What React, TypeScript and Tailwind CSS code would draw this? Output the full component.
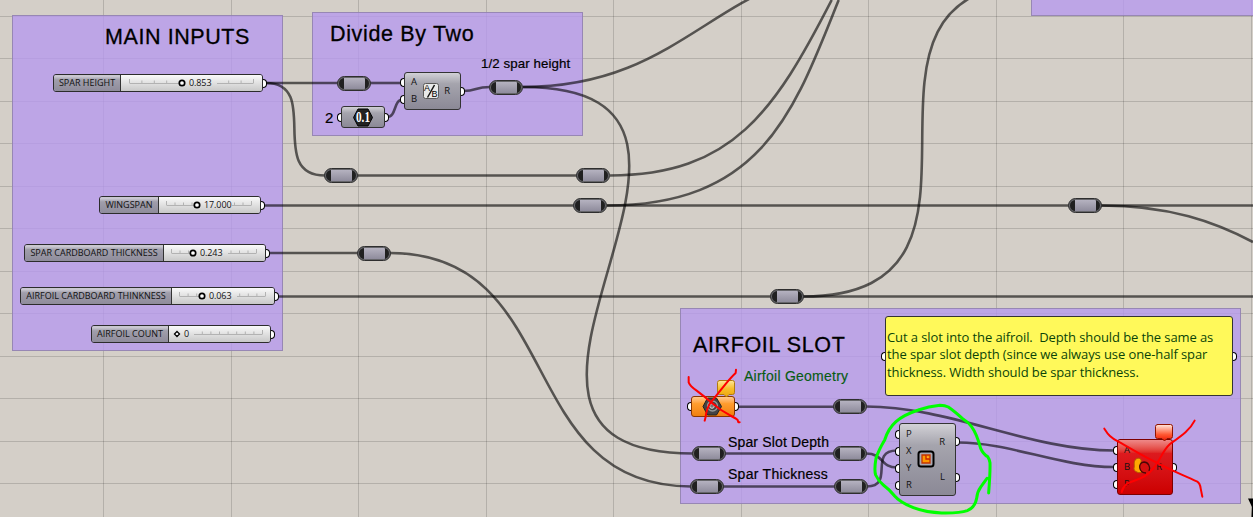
import React from "react";
import clsx from "clsx";

const VERTICALS = [103.5, 231.5, 358.5, 486.5, 613.5, 741.5, 868.5, 996.5, 1123.5, 1251.5];
const HORIZONTALS = [16.5, 58.5, 101.5, 143.5, 186.5, 228.5, 271.5, 313.5, 356.5, 398.5, 441.5, 483.5];

const WIRES = [
  "M266 83H338",
  "M266 83C322 83 266 175.5 325 175.5",
  "M370 83H402",
  "M387 117C397 117 393 99.500 403 99.500",
  "M463 91C478 91 474 87 490 87",
  "M523 87C693 87 717 -36 887 -36",
  "M523 87C799 87 417 453.500 693 453.500",
  "M357 175.500H577",
  "M610 175.500C732.700 175.500 775 110.300 831.700 0",
  "M264 205.500H574",
  "M607 205.500C764 205.500 795 108.300 838.700 0",
  "M607 205.500H1069",
  "M1101 205.500H1253",
  "M1101 205.500C1170 205.500 1215 222 1253 242",
  "M269 253H358",
  "M390 253C567 253 513 486.500 691 486.500",
  "M277 296.500H771",
  "M803 296.500H1253",
  "M803 296.500C1039 296.500 805.700 -17 1040.700 -17",
  "M737 406.800H834",
  "M866 406.500C950 406.500 1030 450.500 1114 450.500",
  "M958 442.500C1010 442.500 1060 467 1114 467",
  "M725 453.500H834",
  "M723 486.500H835",
  "M866 453.500C884 453.500 880 467.500 897 467.500",
  "M867 486.500C895 486.500 868 450.500 897 450.500",
];

const RELAYS = [
  "left-[337px] top-[76px]",
  "left-[489px] top-[80px]",
  "left-[324px] top-[168px]",
  "left-[576px] top-[168px]",
  "left-[573px] top-[198px]",
  "left-[357px] top-[246px]",
  "left-[770px] top-[289px]",
  "left-[1068px] top-[198px]",
  "left-[833px] top-[399px]",
  "left-[692px] top-[446px]",
  "left-[833px] top-[446px]",
  "left-[690px] top-[479px]",
  "left-[834px] top-[479px]",
];

const TITLE = "font-['Liberation_Sans',Arial,sans-serif] text-[21.500px] leading-none whitespace-nowrap text-black [-webkit-text-stroke:0.300px_#000]";
const CAPTION = "absolute font-['Liberation_Sans',Arial,sans-serif] leading-none whitespace-nowrap";
const INK = "text-black [-webkit-text-stroke:0.200px_#000]";

function Grid() {
  return (
    <svg className="pointer-events-none absolute inset-0" width="1253" height="517" stroke="#000" strokeOpacity="0.15">
      {VERTICALS.map((x) => (
        <path key={x} d={`M${x} 0V517`} />
      ))}
      {HORIZONTALS.map((y) => (
        <path key={y} d={`M0 ${y}H1253`} />
      ))}
    </svg>
  );
}

function Wires() {
  return (
    <svg className="absolute inset-0" width="1253" height="517" fill="none" stroke="#000" strokeOpacity="0.6" strokeWidth="2.600">
      {WIRES.map((d) => (
        <path key={d} d={d} />
      ))}
    </svg>
  );
}

function Group({ className, children }: { className: string; children?: React.ReactNode }) {
  return <section className={clsx("absolute border border-[#8d80a8]/80 bg-[#b69aee]/80", className)}>{children}</section>;
}

function Relay({ className }: { className: string }) {
  return (
    <div className={clsx("absolute flex h-[15px] w-[34px] rounded-full border border-[#2e2e2e] bg-[#66666a] p-px", className)}>
      <div className="flex w-full justify-center overflow-hidden rounded-full bg-[#202020]">
        <div className="w-[21px] bg-linear-to-b from-[#b5b2c0] to-[#8f8c9c]" />
      </div>
    </div>
  );
}

function Port({ side }: { side: "l" | "r" }) {
  return (
    <i
      className={clsx(
        "h-[9px] w-[4px] shrink-0 border-[1.500px] border-black bg-white",
        side === "l" ? "-ml-[5px] rounded-l-full border-r-0" : "-mr-[5px] rounded-r-full border-l-0",
      )}
    />
  );
}

interface SliderProps {
  className: string;
  labelClass: string;
  label: string;
  value: string;
  track: [number, number];
  knob: number;
  diamond?: boolean;
}

const VALUE_SLOT = 28;

function Slider({ className, labelClass, label, value, track, knob, diamond }: SliderProps) {
  const [a, b] = track;
  const split = knob + 7;
  const resume = split + (diamond ? 10 : VALUE_SLOT);
  const marks = Array.from({ length: 11 }, (_, i) => ({ x: a + ((b - a) * i) / 10, edge: i === 0 || i === 10 }));
  const tick = ({ x, edge }: { x: number; edge: boolean }) => (
    <path key={x} d={`M${x} ${edge ? 4 : 5.5}V8`} />
  );
  return (
    <div className={clsx("absolute flex h-[18px] items-center font-['Open_Sans','Noto_Sans',sans-serif] text-[9px] text-[#111]", className)}>
      <div className="flex h-full min-w-0 grow overflow-hidden rounded-[3px] border-[1.500px] border-[#2c2c2c]">
        <div
          className={clsx(
            "flex shrink-0 items-center justify-center border-r border-[#333] bg-linear-to-b from-[#c9c7d0] from-10% via-[#a09eab] via-30% to-[#8f8c9b] pb-[2px] leading-none whitespace-nowrap",
            labelClass,
          )}
        >
          {label}
        </div>
        <div className="flex min-w-0 grow items-center overflow-hidden bg-linear-to-b from-[#fafafa] to-[#c8c8c8]">
          <svg className="shrink-0" width={split} height="16" fill="none" stroke="#b2b2b2">
            <path d={`M${Math.min(a, knob)} 8.500H${knob}`} />
            {marks.filter((m) => m.x < knob - 3).map(tick)}
            {diamond ? (
              <path d={`M${knob} 5.500L${knob + 2.5} 8L${knob} 10.500L${knob - 2.5} 8Z`} fill="#fff" stroke="#000" strokeWidth="1.300" />
            ) : (
              <circle cx={knob} cy="8" r="2.700" fill="#fff" stroke="#000" strokeWidth="1.700" />
            )}
          </svg>
          <span className={clsx("shrink-0 pb-px leading-none tracking-[-0.100px]", diamond ? "w-[10px]" : "w-[28px]")}>{value}</span>
          <svg className="shrink-0" width={b - resume + 1} height="16" viewBox={`${resume} 0 ${b - resume + 1} 16`} fill="none" stroke="#b2b2b2">
            <path d={`M${resume} 8.500H${b}`} />
            {marks.filter((m) => m.x > resume).map(tick)}
          </svg>
        </div>
      </div>
      <i className="-mr-[4px] h-[9px] w-[4px] shrink-0 rounded-r-full border-[1.500px] border-l-0 border-black bg-white" />
    </div>
  );
}

const GRAY = "border-[#333] bg-linear-to-b from-[#d2d1d6] via-[#a5a4ad] via-30% to-[#8b8996]";

interface NodeProps {
  className: string;
  tone?: string;
  inputs: string[];
  outputs: string[];
  children: React.ReactNode;
}

function Node({ className, tone = GRAY, inputs, outputs, children }: NodeProps) {
  return (
    <div
      className={clsx(
        "absolute flex items-stretch justify-between rounded-[3px] border-[1.500px] font-['Open_Sans','Noto_Sans',sans-serif] text-[9.500px] leading-none text-[#111]",
        tone,
        className,
      )}
    >
      <div className="flex flex-col justify-center">
        {inputs.map((name, i) => (
          <div key={i} className="flex h-[17px] items-center gap-[7px]">
            <Port side="l" />
            {name && <span className="pb-px">{name}</span>}
          </div>
        ))}
      </div>
      <div className="flex grow items-center justify-center">{children}</div>
      <div className="flex flex-col justify-around">
        {outputs.map((name, i) => (
          <div key={i} className="flex h-[17px] items-center justify-end gap-[11px]">
            {name && <span className="pb-px">{name}</span>}
            <Port side="r" />
          </div>
        ))}
      </div>
    </div>
  );
}

export default function App() {
  return (
    <main className="relative h-[517px] w-[1253px] overflow-hidden bg-[#d4cfc8]">
      <Grid />
      <Group className="top-[15px] left-[12px] flex h-[336px] w-[271px] justify-end pt-[11px] pr-[32px]">
        <h2 className={clsx(TITLE, "tracking-[0.580px]")}>MAIN INPUTS</h2>
      </Group>
      <Group className="top-[12px] left-[312px] h-[124px] w-[271px] pt-[11px] pl-[17px]">
        <h2 className={clsx(TITLE, "tracking-[0.650px]")}>Divide By Two</h2>
      </Group>
      <Group className="top-[308px] left-[680px] h-[196px] w-[561px] pt-[26px] pl-[12px]">
        <h2 className={clsx(TITLE, "tracking-[0.620px]")}>AIRFOIL SLOT</h2>
      </Group>
      <Group className="-top-[10px] left-[1031px] h-[26px] w-[240px]" />
      <Wires />

      <p className={clsx(CAPTION, INK, "top-[57px] left-[481px] text-[13.300px] tracking-[0.080px]")}>1/2 spar height</p>
      <p className={clsx(CAPTION, INK, "top-[110px] left-[325px] text-[15px]")}>2</p>
      <p className={clsx(CAPTION, "top-[369px] left-[744px] text-[14px] tracking-[0.250px] text-[#075c12] [-webkit-text-stroke:0.150px_#075c12]")}>Airfoil Geometry</p>
      <p className={clsx(CAPTION, INK, "top-[435px] left-[728px] text-[14px] tracking-[0.150px]")}>Spar Slot Depth</p>
      <p className={clsx(CAPTION, INK, "top-[467px] left-[728px] text-[14px] tracking-[0.280px]")}>Spar Thickness</p>

      <Slider className="top-[74px] left-[53px] w-[210px]" labelClass="w-[67px]" label="SPAR HEIGHT" value="0.853" track={[8.5, 132.5]} knob={61} />
      <Slider className="top-[196px] left-[99px] w-[162px]" labelClass="w-[59px]" label="WINGSPAN" value="17.000" track={[7.5, 92.5]} knob={38} />
      <Slider className="top-[244px] left-[24px] w-[242px]" labelClass="w-[139px]" label="SPAR CARDBOARD THICKNESS" value="0.243" track={[7.5, 92.5]} knob={29} />
      <Slider className="top-[287px] left-[20px] w-[255px]" labelClass="w-[151px]" label="AIRFOIL CARDBOARD THINKNESS" value="0.063" track={[7.5, 93.5]} knob={30} />
      <Slider className="top-[325px] left-[91px] w-[180px]" labelClass="w-[77px]" label="AIRFOIL COUNT" value="0" track={[7.5, 93.5]} knob={8} diamond />

      {RELAYS.map((pos) => (
        <Relay key={pos} className={pos} />
      ))}

      <Node className="top-[72px] left-[404px] h-[38px] w-[57px]" inputs={["A", "B"]} outputs={["R"]}>
        <svg className="-mr-px shrink-0" width="16" height="17" fontFamily="Liberation Sans, Arial, sans-serif" fontSize="9">
          <rect x="0.500" y="0.500" width="15" height="15" rx="2" fill="#e9e9e9" stroke="#5a5a5a" />
          <path d="M11.500 2L4.500 14.500" stroke="#111" strokeWidth="1.500" />
          <text x="1" y="8">A</text>
          <text x="8.500" y="14">B</text>
        </svg>
      </Node>

      <Node className="top-[106px] left-[341px] h-[22px] w-[44px]" inputs={[""]} outputs={[""]}>
        <svg className="shrink-0" width="22" height="19">
          <path d="M1.500 9.500L6 1H16L20.500 9.500L16 18H6Z" fill="#222" stroke="#000" />
          <text x="11" y="14" textAnchor="middle" textLength="14" lengthAdjust="spacingAndGlyphs" fill="#fff" fontFamily="Liberation Serif, serif" fontSize="14" fontWeight="700">
            0.1
          </text>
        </svg>
      </Node>

      <Node
        className="top-[396px] left-[691px] h-[21px] w-[44px]"
        tone="border-[#8a3500] bg-linear-to-b from-[#ffc98a] via-[#ff9d2e] via-35% to-[#f07f0c]"
        inputs={[""]}
        outputs={[""]}
      >
        <svg className="mr-[2px] shrink-0" width="21" height="19" fill="none">
          <path d="M1 9.500L5.500 1H14.500L19.500 9.500L14.500 18H5.500Z" fill="#444" stroke="#222" />
          <circle cx="10.500" cy="9" r="5" stroke="#999" strokeWidth="1.300" />
          <circle cx="10" cy="9" r="2.300" fill="#777" stroke="#ddd" />
        </svg>
      </Node>

      <Node className="top-[423px] left-[899px] h-[73px] w-[57px]" inputs={["P", "X", "Y", "R"]} outputs={["R", "L"]}>
        <svg className="-mr-px mb-[2px] shrink-0" width="18" height="18">
          <rect x="1.500" y="1.500" width="15" height="15" rx="2.500" fill="#aaa8b2" stroke="#000" strokeWidth="2" />
          <path d="M5 5H13V13H5Z" fill="#ff9800" stroke="#c43400" strokeWidth="1.300" />
          <path d="M9 5V9H13" fill="#ffb020" stroke="#c42000" strokeWidth="1.300" />
        </svg>
      </Node>

      <Node
        className="top-[439px] left-[1117px] h-[56px] w-[56px]"
        tone="border-[#7d0000] bg-linear-to-b from-[#e88] via-[#dd1a1e] via-25% to-[#cc0000]"
        inputs={["A", "B", "P"]}
        outputs={["R"]}
      >
        <svg className="mr-[2px] shrink-0" width="20" height="20" fill="none">
          <path d="M4 2C7 0 10 2 9 5C8 8 13 10 11 14C8 18 1 14 2 11C3 8 1 5 4 2Z" fill="#ffa800" stroke="#b35a00" />
          <path d="M14 16C7 16 5 6 12 5C16 5 19 10 17 14" fill="#d4100f" stroke="#4a0505" strokeWidth="1.300" />
        </svg>
      </Node>

      <div className="absolute top-[316px] left-[885px] flex h-[80px] w-[348px] items-center rounded-[3px] border-[1.500px] border-[#333] bg-[#fff95a]">
        <Port side="l" />
        <p className="grow pb-[2px] pl-[2px] font-['Open_Sans','Noto_Sans',sans-serif] text-[13px] leading-[17.300px] tracking-[-0.100px] whitespace-pre text-[#0a4408]">
          {"Cut a slot into the aifroil.  Depth should be the same as\nthe spar slot depth (since we always use one-half spar\nthickness. Width should be spar thickness."}
        </p>
        <Port side="r" />
      </div>

      <svg className="pointer-events-none absolute inset-0" width="1253" height="517" fill="none" strokeLinecap="round" strokeLinejoin="round">
        <defs>
          <linearGradient id="amber" x2="0" y2="1">
            <stop stopColor="#ffe79a" />
            <stop offset="0.500" stopColor="#f7bd2b" />
            <stop offset="1" stopColor="#eda60a" />
          </linearGradient>
          <linearGradient id="flame" x2="0" y2="1">
            <stop stopColor="#ffe8df" />
            <stop offset="0.600" stopColor="#ff5a35" />
            <stop offset="1" stopColor="#f01800" />
          </linearGradient>
        </defs>
        <path d="M719.500 380.500H732.500Q734.500 380.500 734.500 382.500V392.500Q734.500 394.500 732.500 394.500H729L726.500 397L724 394.500H719.500Q717.500 394.500 717.500 392.500V382.500Q717.500 380.500 719.500 380.500Z" fill="url(#amber)" stroke="#b07a10" />
        <path d="M1157.500 424.500H1170.500Q1172.500 424.500 1172.500 426.500V436.500Q1172.500 438.500 1170.500 438.500H1167L1164.500 441L1162 438.500H1157.500Q1155.500 438.500 1155.500 436.500V426.500Q1155.500 424.500 1157.500 424.500Z" fill="url(#flame)" stroke="#8f1500" />
        <g transform="translate(670 300) scale(0.3333)" stroke="#ff0000" strokeWidth="6">
          <path d="M56 231V247Q60 258 80 272Q105 291 125 308Q150 330 178 345Q196 354 203 360L205 367H209" />
          <path d="M198 209L197 219Q185 230 166 253Q140 285 121 309Q110 325 107 350L104 362" />
        </g>
        <g transform="translate(1090 400) scale(0.3333)" stroke="#ff0000" strokeWidth="6">
          <path d="M43 86C55 105 62 113 85 125C125 147 160 170 200 188C235 208 280 225 322 245Q330 250 332 265L337 290" />
          <path d="M314 62C300 90 275 107 240 132C215 155 212 180 190 205C165 238 135 238 110 252Q97 264 95 276" />
        </g>
        <path
          transform="translate(860 395) scale(0.3333)"
          stroke="#00ff00"
          strokeWidth="9"
          d="M386 294Q391 230 390 203Q388 192 383 185Q370 178 362 160Q350 115 334 94Q325 82 310 73Q285 50 265 36Q255 31 240 31Q205 34 175 45Q130 60 108 80Q85 100 74 135Q56 165 48 190Q42 225 47 240Q55 258 70 270Q90 285 104 303Q120 322 160 338Q200 353 245 354Q300 355 322 347Q345 338 350 310Q352 290 363 275L381 250"
        />
        <path d="M1248 498.500H1253V517H1251.500L1252 507Z" fill="#000" />
      </svg>
    </main>
  );
}
